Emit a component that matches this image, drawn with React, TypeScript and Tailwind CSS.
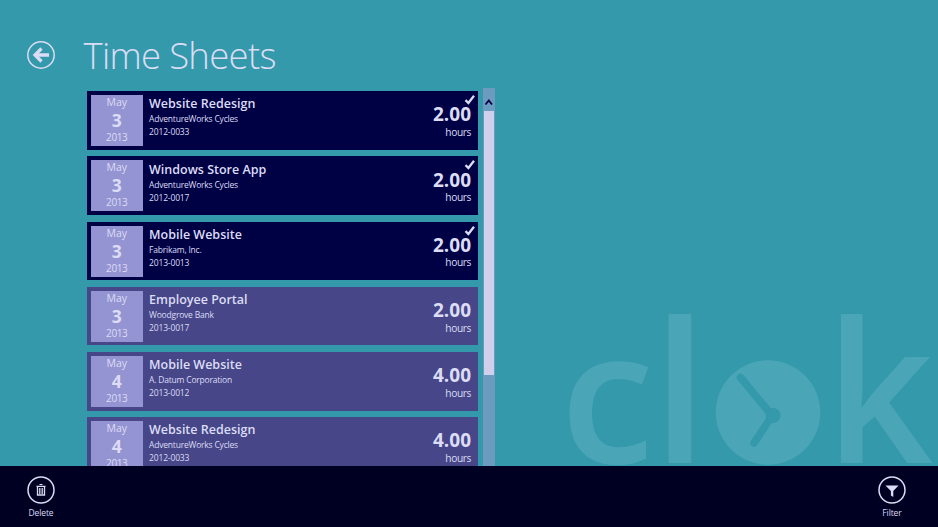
import React from "react";

type Entry = { day: string; title: string; client: string; code: string; hours: string; done: boolean };

const entries: Entry[] = [
  { day: "3", title: "Website Redesign", client: "AdventureWorks Cycles", code: "2012-0033", hours: "2.00", done: true },
  { day: "3", title: "Windows Store App", client: "AdventureWorks Cycles", code: "2012-0017", hours: "2.00", done: true },
  { day: "3", title: "Mobile Website", client: "Fabrikam, Inc.", code: "2013-0013", hours: "2.00", done: true },
  { day: "3", title: "Employee Portal", client: "Woodgrove Bank", code: "2013-0017", hours: "2.00", done: false },
  { day: "4", title: "Mobile Website", client: "A. Datum Corporation", code: "2013-0012", hours: "4.00", done: false },
  { day: "4", title: "Website Redesign", client: "AdventureWorks Cycles", code: "2012-0033", hours: "4.00", done: false },
];

function Card({ e }: { e: Entry }) {
  return (
    <div className={`relative flex h-[58.6px] shrink-0 pl-[4px] pt-[4px] ${e.done ? "bg-[#000044]" : "bg-[#464688]"}`}>
      <div className="flex h-[51px] w-[51.5px] flex-col items-center bg-[#9494d2]">
        <div className="h-[15px] text-[10.5px] font-medium leading-[15px]">May</div>
        <div className="h-[20px] text-[17.5px] font-bold leading-[21px]">{e.day}</div>
        <div className="h-[15px] text-[10px] font-medium leading-[15px] tracking-[-0.4px]">2013</div>
      </div>
      <div className="flex flex-1 flex-col pl-[6.5px] pt-[0.3px]">
        <div className="h-[17px] text-[12.5px] font-semibold leading-[17px]">{e.title}</div>
        <div className="h-[13px] text-[8.5px] font-medium leading-[13px] tracking-[-0.2px]">{e.client}</div>
        <div className="h-[14px] text-[8.5px] font-medium leading-[14px] tracking-[-0.15px]">{e.code}</div>
      </div>
      <div className="flex flex-col items-end pr-[7px] pt-[8.3px]">
        <div className="h-[22.5px] text-[19px] font-bold leading-[23px]">{e.hours}</div>
        <div className="h-[12px] text-[10.2px] font-medium leading-[12px] tracking-[-0.4px]">hours</div>
      </div>
      {e.done && (
        <svg className="absolute right-[2.5px] top-[3px]" width="12" height="11" viewBox="0 0 12 11">
          <path d="M1.5 6.2 4.4 9 10 1.8" fill="none" stroke="#dcdcf4" strokeWidth="2.300" />
        </svg>
      )}
    </div>
  );
}

function Watermark() {
  return (
    <svg className="absolute right-0 top-[290px]" width="398" height="237" viewBox="540 290 398 237">
      <g fill="#4aa5b7" fontFamily="'Open Sans', 'Noto Sans', sans-serif" fontWeight="600" fontSize="196">
        <text transform="translate(560 462.500) scale(0.970 0.940)" fontWeight="650">c</text>
        <text transform="translate(652.500 462.500)">l</text>
        <text transform="translate(825.500 462.500) scale(0.960 1)">k</text>
        <circle cx="768" cy="412.500" r="52.300" />
      </g>
      <g stroke="#3399ab" strokeWidth="7.500" strokeLinecap="round" strokeLinejoin="round">
        <path d="M740.500 377.500 770 413 770 419 754 443" fill="none" />
        <circle cx="773" cy="415.500" r="7.500" fill="#3399ab" stroke="none" />
      </g>
    </svg>
  );
}

function BarButton({ label, children }: { label: string; children: React.ReactNode }) {
  return (
    <div className="flex w-[50px] flex-col items-center">
      <svg width="28" height="28" viewBox="0 0 28 28">
        <circle cx="14" cy="14" r="13" fill="none" stroke="#dcdcf4" strokeWidth="1.500" />
        {children}
      </svg>
      <div className="mt-[3px] text-[8.5px] font-medium leading-[12px] tracking-[-0.1px]">{label}</div>
    </div>
  );
}

export default function App() {
  return (
    <div className="relative flex h-[527px] w-[938px] flex-col overflow-hidden bg-[#3399ab] font-['Open_Sans','Noto_Sans',sans-serif] text-[#dcdcf4]">
      <Watermark />
      <header className="flex h-[88px] shrink-0 items-start pl-[27px]">
        <svg className="mt-[41px]" width="28" height="28" viewBox="0 0 28 28" fill="none" stroke="#dcdcf4">
          <circle cx="14" cy="14" r="13.200" strokeWidth="1.500" />
          <path d="M22 14H8" strokeWidth="3.500" />
          <path d="M14.500 7.500 8 14 14.500 20.500" strokeWidth="3.200" />
        </svg>
        <h1 className="ml-[28.5px] mt-[30px] whitespace-nowrap text-[36.5px] font-light leading-[50px] tracking-[-0.7px]">Time Sheets</h1>
      </header>
      <div className="flex min-h-0 flex-1 pl-[87px]">
        <main className="flex w-[391px] flex-col gap-[6.6px] overflow-hidden pt-[3.2px]">
          {entries.map((e, i) => (
            <Card key={i} e={e} />
          ))}
        </main>
        <div className="ml-[5px] flex w-[12px] flex-col items-center bg-[#6c9bc0]">
          <svg width="12" height="23" viewBox="0 0 12 23">
            <path d="M2.500 16.500 5.800 12.500 9 16.500" fill="none" stroke="#000044" strokeWidth="1.800" />
          </svg>
          <div className="h-[264px] w-[10px] bg-[#d0d0ec]" />
        </div>
      </div>
      <footer className="relative flex h-[61px] shrink-0 justify-between bg-[#000022] pl-[16px] pr-[21px] pt-[9.5px]">
        <BarButton label="Delete">
          <g stroke="#dcdcf4" fill="none">
            <path d="M9.500 10.300H18.500M12.500 8.500H15.500" strokeWidth="1.200" />
            <path d="M10.500 11V19H17.500V11M12.800 12V18M15.200 12V18" strokeWidth="1.300" />
          </g>
        </BarButton>
        <BarButton label="Filter">
          <path d="M7.500 9.500H20.500L15.300 15V21L12.900 19.500V15Z" fill="#dcdcf4" />
        </BarButton>
      </footer>
    </div>
  );
}
